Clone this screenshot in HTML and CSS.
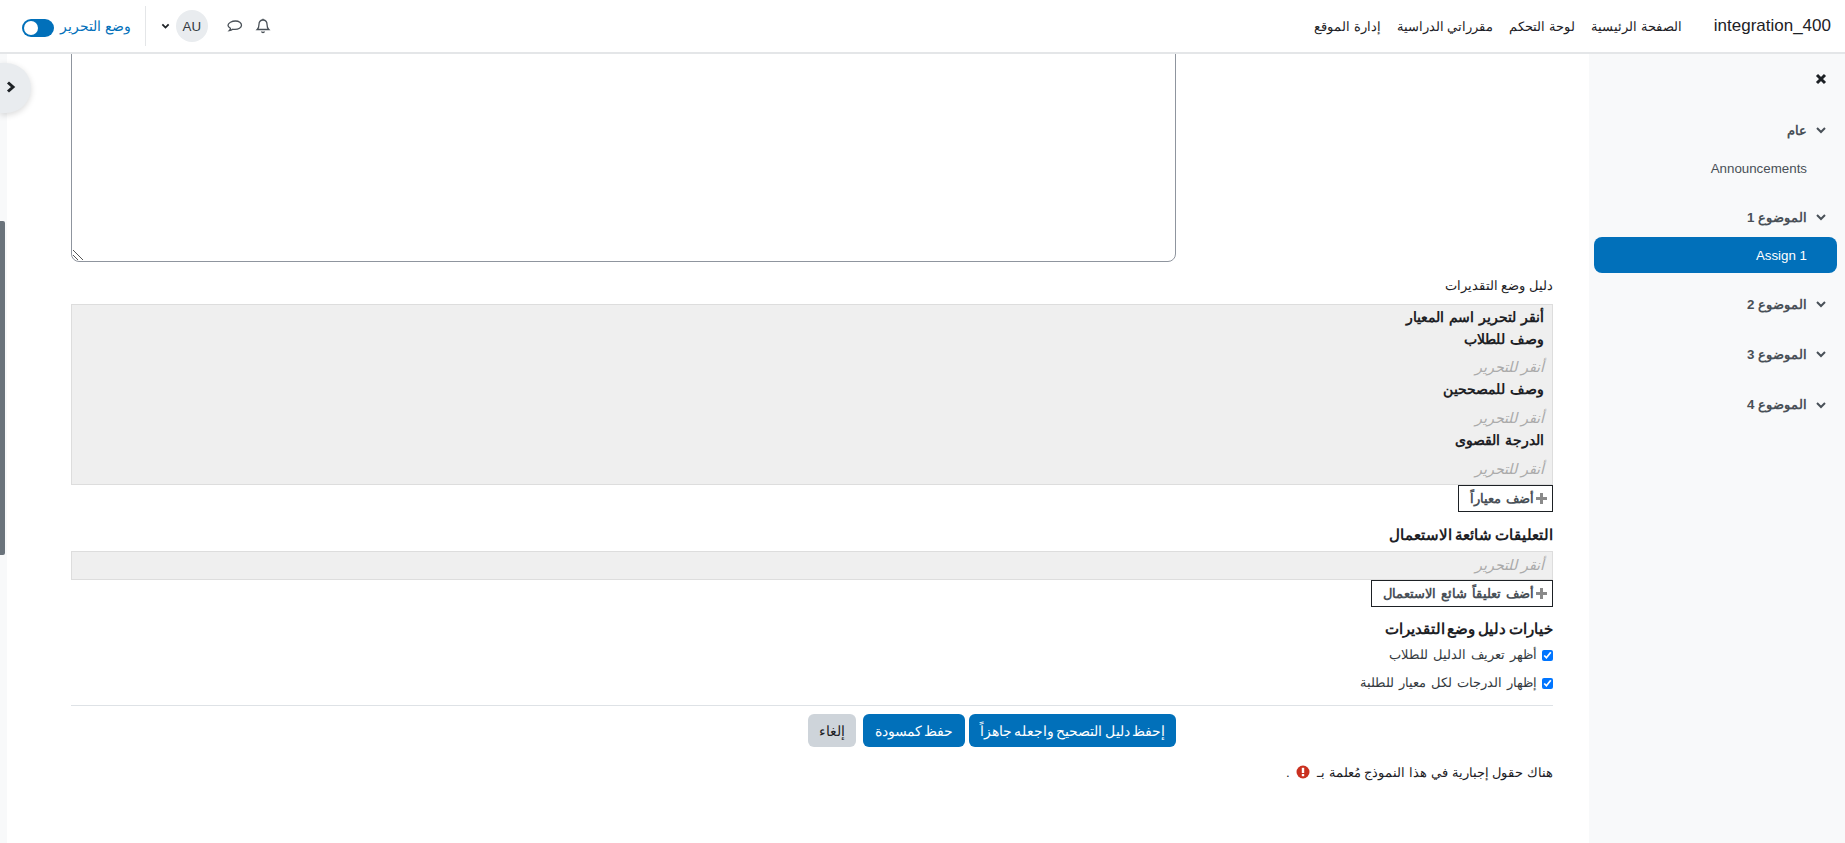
FILE: index.html
```html
<!DOCTYPE html>
<html lang="ar" dir="rtl">
<head>
<meta charset="utf-8">
<title>integration_400</title>
<link rel="stylesheet" href="styles.css">
</head>
<body>
<header class="navbar">
  <div class="nav-start">
    <span class="brand" dir="ltr">integration_400</span>
    <nav class="nav-links">
      <a>الصفحة الرئيسية</a>
      <a>لوحة التحكم</a>
      <a>مقرراتي الدراسية</a>
      <a>إدارة الموقع</a>
    </nav>
  </div>
  <div class="nav-end">
    <svg class="nav-icon" viewBox="0 0 16 16" fill="none" stroke="#495057" stroke-width="1.3"><path d="M8 2c-2.6 0-4 1.9-4 4.2 0 3.1-.7 4.300-1.800 5.300h11.600c-1.100-1-1.800-2.200-1.800-5.300C12 3.900 10.600 2 8 2z"/><path d="M6.500 13.500c.3.800.9 1 1.500 1s1.200-.2 1.500-1"/><path d="M8 .8V2"/></svg>
    <svg class="nav-icon" viewBox="0 0 16 16" fill="none" stroke="#495057" stroke-width="1.3"><path d="M8.500 3C5 3 1 4.800 1 7.300c0 1.300.8 2.300 2.500 3-.1.900-.6 1.700-1.300 2.400 1.300-.1 2.600-.6 3.500-1.400.7.100 1.500.1 2.300.1 3.400 0 6.500-1.800 6.500-4.100S12 3 8.500 3z"/></svg>
    <span class="avatar">AU</span>
    <svg class="caret" viewBox="0 0 10 10" fill="none" stroke="#1d2125" stroke-width="2"><path d="M1.500 3.200 5 6.700l3.500-3.500"/></svg>
    <span class="divider"></span>
    <span class="edit-label">وضع التحرير</span>
    <span class="toggle"><span class="knob"></span></span>
  </div>
</header>

<div class="layout">
  <aside class="course-index">
    <div class="close-row"><svg class="close-icon" viewBox="0 0 12 12" stroke="#1d2125" stroke-width="3"><path d="M2 2l8 8M10 2l-8 8"/></svg></div>
    <div class="section-title first"><svg class="chev" viewBox="0 0 12 12" fill="none" stroke="#495057" stroke-width="2"><path d="M2 4l4 4 4-4"/></svg><span>عام</span></div>
    <div class="activity"><span>Announcements</span></div>
    <div class="section-title gap"><svg class="chev" viewBox="0 0 12 12" fill="none" stroke="#495057" stroke-width="2"><path d="M2 4l4 4 4-4"/></svg><span>الموضوع 1</span></div>
    <div class="activity current"><span>Assign 1</span></div>
    <div class="section-title gap"><svg class="chev" viewBox="0 0 12 12" fill="none" stroke="#495057" stroke-width="2"><path d="M2 4l4 4 4-4"/></svg><span>الموضوع 2</span></div>
    <div class="section-title"><svg class="chev" viewBox="0 0 12 12" fill="none" stroke="#495057" stroke-width="2"><path d="M2 4l4 4 4-4"/></svg><span>الموضوع 3</span></div>
    <div class="section-title"><svg class="chev" viewBox="0 0 12 12" fill="none" stroke="#495057" stroke-width="2"><path d="M2 4l4 4 4-4"/></svg><span>الموضوع 4</span></div>
  </aside>

  <main class="content">
    <div class="textarea-box">
      <svg class="grip" viewBox="0 0 10 10" stroke="#555" stroke-width="1"><path d="M0 0l10 10M0 5l5 5"/></svg>
    </div>
    <div class="field-label">دليل وضع التقديرات</div>
    <div class="criteria-box">
      <div class="strong-line">أنقر لتحرير اسم المعيار</div>
      <div class="strong-line">وصف للطلاب</div>
      <div class="hint">أنقر للتحرير</div>
      <div class="strong-line">وصف للمصححين</div>
      <div class="hint lower">أنقر للتحرير</div>
      <div class="strong-line">الدرجة القصوى</div>
      <div class="hint lower">أنقر للتحرير</div>
    </div>
    <div class="add-row"><button class="add-btn"><span class="plus"></span>أضف معياراً</button></div>
    <h3 class="sub-head comments-head">التعليقات شائعة الاستعمال</h3>
    <div class="comment-box"><div class="hint single">أنقر للتحرير</div></div>
    <div class="add-row"><button class="add-btn"><span class="plus"></span>أضف تعليقاً شائع الاستعمال</button></div>
    <h3 class="sub-head options-head">خيارات دليل وضع التقديرات</h3>
    <label class="check one"><input type="checkbox" checked>أظهر تعريف الدليل للطلاب</label>
    <label class="check two"><input type="checkbox" checked>إظهار الدرجات لكل معيار للطلبة</label>
    <hr class="rule">
    <div class="actions">
      <button class="btn primary wide">إحفظ دليل التصحيح واجعله جاهزاً</button>
      <button class="btn primary draft">حفظ كمسودة</button>
      <button class="btn cancel">إلغاء</button>
    </div>
    <p class="required">هناك حقول إجبارية في هذا النموذج مُعلمة بـ <svg class="req-icon" viewBox="0 0 14 14"><circle cx="7" cy="7" r="6.5" fill="#ca3120"/><rect x="5.800" y="2.800" width="2.400" height="5.200" fill="#fff"/><rect x="5.800" y="9" width="2.400" height="2.200" fill="#fff"/></svg> .</p>
  </main>
</div>

<div class="left-strip"></div>
<div class="drawer-toggle"><svg viewBox="0 0 12 12" fill="none" stroke="#1d2125" stroke-width="3"><path d="M3 1.500 8 6l-5 4.500"/></svg></div>
<div class="scroll-thumb"></div>
</body>
</html>
```
FILE: styles.css
```css
* { box-sizing: border-box; }
html, body { margin: 0; height: 100%; overflow: hidden; }
body {
  background: #fff;
  color: #1d2125;
  font-family: "Liberation Sans", "Noto Sans", sans-serif;
  font-size: 13.33px;
}
.navbar {
  position: relative;
  z-index: 2;
  background: #fff;
  height: 54px;
  border-bottom: 2px solid #e4e6e8;
  display: flex;
  justify-content: space-between;
  align-items: center;
  padding: 0 14px 0 22px;
}
.nav-start { display: flex; align-items: center; }
.brand { font-size: 17px; margin-left: 32px; }
.nav-links { display: flex; gap: 16px; }
.nav-links a { color: #1d2125; }
.nav-end { display: flex; align-items: center; }
.nav-icon { width: 16px; height: 16px; margin-left: 12px; }
.nav-icon + .nav-icon { margin-left: 19px; }
.avatar {
  width: 32px; height: 32px; border-radius: 50%;
  background: #e9ecef; color: #343a40;
  display: flex; align-items: center; justify-content: center;
}
.caret { width: 9px; height: 10px; margin-right: 6px; }
.divider { width: 1px; height: 40px; background: #e4e6e8; margin: 0 15px 0 14px; }
.edit-label { color: #0170ba; margin-left: 6px; font-size: 13.8px; }
.toggle { width: 32px; height: 18px; margin-top: 4px; border-radius: 9px; background: #0170ba; display: flex; justify-content: flex-end; align-items: center; padding: 0 2px; }
.knob { width: 14px; height: 14px; border-radius: 50%; background: #fff; }

.layout { display: flex; height: 789px; }
.course-index {
  width: 256px; flex: none; background: #f8f9fa;
  padding: 0 8px 0 5px;
}
.close-row { height: 24px; margin-top: 13px; padding-right: 10px; display: flex; align-items: center; }
.close-icon { width: 12px; height: 12px; }
.section-title {
  height: 22px; margin-top: 28.4px;
  display: flex; align-items: center; gap: 8px; padding-right: 10px;
  font-weight: 700; color: #495057;
}
.section-title.first { margin-top: 28px; }
.section-title.gap { margin-top: 20px; }
.chev { width: 12px; height: 12px; }
.activity { height: 36px; margin-top: 9px; padding-right: 30px; display: flex; align-items: center; color: #495057; }
.activity.current { background: #0170ba; color: #fff; border-radius: 8px; }

.content { flex: 1; padding-right: 36px; min-width: 0; }
.content > * { width: 1482px; }
.content > .textarea-box {
  width: 1105px; height: 228px;
  margin-right: 377px; margin-top: -20px;
  border: 1px solid #8f959e; border-radius: 8px; position: relative;
}
.grip { position: absolute; left: 1px; bottom: 1px; width: 10px; height: 10px; }
.field-label { margin-top: 14px; line-height: 20px; }
.criteria-box { margin-top: 8px; height: 181px; background: #efefef; border: 1px solid #ddd; padding: 1px 8px 0 0; }
.strong-line { font-weight: 700; font-size: 14.4px; word-spacing: 1px; line-height: 22px; color: #1d2125; }
.hint { font-style: italic; font-size: 14.4px; line-height: 22px; color: #aaa; margin-top: 6px; }
.hint.lower { margin-top: 7px; }
.hint.single { margin-top: 0; line-height: 26px; }
.add-row { display: flex; }
.add-btn {
  background: #fff; border: 1px solid #1d2125; padding: 0 5px 0 11px; height: 27px;
  font: 700 13.2px "Liberation Sans", sans-serif; word-spacing: 1.2px; color: #495057; display: flex; align-items: center;
}
.plus { width: 11px; height: 11px; display: block; margin-left: 2px; flex: none; background:
  linear-gradient(#8a8a8a,#8a8a8a) center/11px 3px no-repeat,
  linear-gradient(#8a8a8a,#8a8a8a) center/3px 11px no-repeat; }
.sub-head { font-size: 14.6px; font-weight: 700; word-spacing: -1.3px; margin: 0; line-height: 20px; }
.comments-head { margin-top: 13px; }
.comment-box { margin-top: 6px; height: 29px; background: #efefef; border: 1px solid #ddd; padding-right: 8px; }
.options-head { margin-top: 12px; }
.check { display: flex; align-items: center; color: #343a40; line-height: 20px; word-spacing: 1.3px; }
.check input { margin: 0 0 0 5px; width: 11px; height: 11px; accent-color: #0075ff; }
.check.one { margin-top: 6px; }
.check.two { margin-top: 8px; }
.rule { border: 0; border-top: 1px solid #dee2e6; margin: 12px 0 0; }
.actions { display: flex; margin-top: 8px; padding-right: 377px; }
.btn { height: 33px; border: 0; border-radius: 6px; padding: 0; font: 13.8px "Liberation Sans", sans-serif; word-spacing: -1.5px; }
.primary { background: #0170ba; color: #fff; margin-left: 4px; }
.wide { width: 207px; }
.draft { width: 102px; }
.cancel { background: #ced4da; color: #1d2125; width: 48px; margin-right: 3px; }
.required { margin: 16px 0 0; line-height: 20px; }
.req-icon { width: 14px; height: 14px; vertical-align: -2px; margin: 0 3px; }

.left-strip { position: absolute; left: 0; top: 54px; bottom: 0; width: 7px; background: #f8f9fa; }
.drawer-toggle {
  position: absolute; left: 0; top: 63px; width: 31px; height: 50px;
  background: #e9ecef; border-radius: 0 25px 25px 0;
  box-shadow: 0 2px 6px rgba(0,0,0,.15);
  display: flex; align-items: center; justify-content: flex-end; padding-left: 5px;
}
.drawer-toggle svg { width: 12px; height: 12px; margin-top: -2px; }
.scroll-thumb { position: absolute; left: 0; top: 221px; width: 5px; height: 334px; background: #6a737b; border-radius: 0 2px 2px 0; }
```
